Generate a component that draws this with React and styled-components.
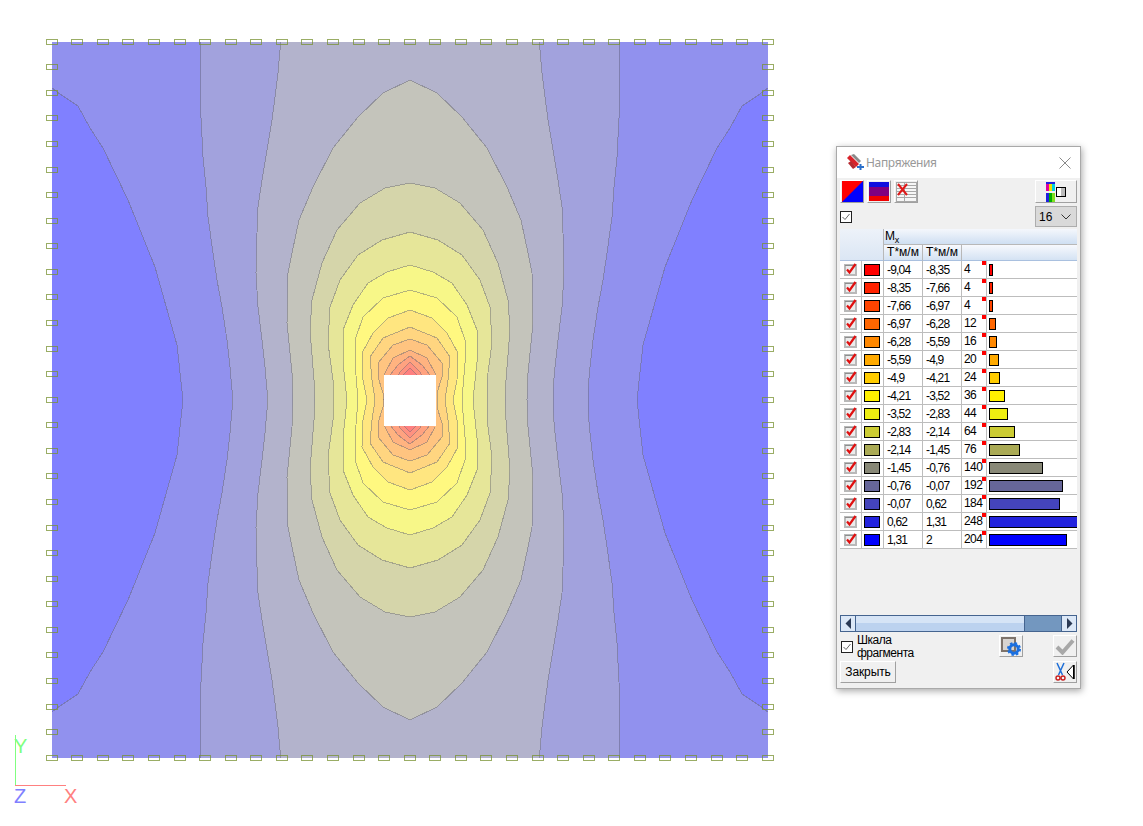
import React from "react";
import styled, { createGlobalStyle } from "styled-components";

const GlobalStyle = createGlobalStyle`
  html, body { margin: 0; padding: 0; background: #fff; overflow: hidden; }
  body { font-family: "Liberation Sans", Arial, sans-serif; }
`;

// legend, top to bottom
const legend = [
  { from: "-9,04", to: "-8,35", count: 4, color: "#ff0000", bar: 4 },
  { from: "-8,35", to: "-7,66", count: 4, color: "#ff2200", bar: 4 },
  { from: "-7,66", to: "-6,97", count: 4, color: "#ff4400", bar: 4 },
  { from: "-6,97", to: "-6,28", count: 12, color: "#ff6600", bar: 7 },
  { from: "-6,28", to: "-5,59", count: 16, color: "#ff8800", bar: 8 },
  { from: "-5,59", to: "-4,9", count: 20, color: "#ffaa00", bar: 10 },
  { from: "-4,9", to: "-4,21", count: 24, color: "#ffcc00", bar: 11 },
  { from: "-4,21", to: "-3,52", count: 36, color: "#fff000", bar: 16 },
  { from: "-3,52", to: "-2,83", count: 44, color: "#eeee11", bar: 19 },
  { from: "-2,83", to: "-2,14", count: 64, color: "#cccc33", bar: 26 },
  { from: "-2,14", to: "-1,45", count: 76, color: "#aaaa55", bar: 31 },
  { from: "-1,45", to: "-0,76", count: 140, color: "#888877", bar: 54 },
  { from: "-0,76", to: "-0,07", count: 192, color: "#666699", bar: 74 },
  { from: "-0,07", to: "0,62", count: 184, color: "#4444bb", bar: 71 },
  { from: "0,62", to: "1,31", count: 248, color: "#2222dd", bar: 92 },
  { from: "1,31", to: "2", count: 204, color: "#0000ff", bar: 78 },
];

// plot fill bands, outer to inner (legend colours at 50% over white)
const bands = [
  "#8080ff", "#9191ee", "#a2a2dd", "#b3b3cc", "#c4c4bb", "#d5d5aa", "#e6e699", "#f7f788",
  "#fff880", "#ffe680", "#ffd580", "#ffc480", "#ffb380", "#ffa280", "#ff9180", "#ff8080",
];

// contours as the upper left quarter, the rest is mirrored around (410, 400)
const lobe = [[52,88],[60,94],[78,106],[90,128],[103,148],[128,200],[155,267],[177,345],[183,400]];
const contours = [
  [[200.7,42],[200.7,112],[202,137],[203,157],[206,187],[208,217],[213,253],[217,280],[222,307],[227,340],[230,367],[232,390],[232,400]],
  [[280.7,42],[278,73],[275,97],[272,120],[267,150],[262,180],[258,207],[257,233],[256,273],[258,307],[262,340],[265,367],[267,390],[267,400]],
  [[410,80],[383,93],[358,117],[333,148],[313,187],[299,220],[292,253],[288,273],[287,323],[292,373],[293,400]],
  [[410,183],[385,188],[360,203],[337,230],[322,263],[312,300],[310,330],[314,380],[315,400]],
  [[410,232],[382,240],[358,255],[340,280],[330,307],[328,343],[333,380],[333,400]],
  [[410,265],[387,272],[368,283],[353,305],[343,330],[343,362],[347,400]],
  [[410,290],[383,298],[363,317],[355,340],[355,363],[358,400]],
  [[410,310],[388,318],[373,333],[362,353],[363,380],[367,400]],
  [[410,327],[383,338],[370,357],[372,380],[375,400]],
  [[410,339],[393,345],[378,363],[378,377],[383,393],[383,400]],
  [[410,350],[393,358],[385,373],[384,400]],
  [[410,356],[398,365],[390,375],[390,400]],
  [[410,362],[400,372],[396,380],[396,400]],
  [[410,368],[403,375],[403,400]],
];

const flipY = (pts) => [...pts].reverse().map(([x, y]) => [x, 800 - y]);
const flipX = (pts) => pts.map(([x, y]) => [820 - x, y]);
const str = (pts) => pts.map((p) => p.join(",")).join(" ");

const nodes = [];
for (let i = 0; i <= 28; i++) {
  const c = 25.57 * i;
  nodes.push([52 + c, 42], [52 + c, 758]);
  if (i > 0 && i < 28) nodes.push([52, 42 + c], [768, 42 + c]);
}

const LINE = "rgba(105,105,115,0.48)";

const Plot = () => {
  const left = [...lobe, ...flipY(lobe).slice(1)];
  return (
    <PlotSvg width="1143" height="826" viewBox="0 0 1143 826">
      <rect x="52" y="42" width="716" height="716" fill={bands[1]} />
      <polygon points={str(left)} fill={bands[0]} />
      <polygon points={str(flipX(left))} fill={bands[0]} />
      <g shapeRendering="crispEdges" fill="none" stroke={LINE}>
        <polyline points={str(left)} />
        <polyline points={str(flipX(left))} />
      </g>
      {contours.map((q, i) => {
        const half = [...q, ...flipY(q).slice(1)];
        const other = flipX(half);
        return (
          <g key={i}>
            <polygon points={str([...half, ...[...other].reverse()])} fill={bands[i + 2]} />
            <g shapeRendering="crispEdges" fill="none" stroke={LINE}>
              <polyline points={str(half)} />
              <polyline points={str(other)} />
            </g>
          </g>
        );
      })}
      <rect x="384" y="375" width="52" height="51" fill="#fff" />
      <g fill="none" stroke="rgba(120,145,50,0.75)" shapeRendering="crispEdges">
        {nodes.map(([x, y], i) => (
          <rect key={i} x={Math.round(x - 6.3) + 0.5} y={Math.round(y - 3.3) + 0.5} width="11" height="5" />
        ))}
      </g>
      <line x1="15.5" y1="735" x2="15.5" y2="786" stroke="#80ff80" />
      <line x1="15" y1="785.5" x2="66" y2="785.5" stroke="#ff8080" />
      <AxisLabel x="14" y="753" fill="#80ff80">Y</AxisLabel>
      <AxisLabel x="14" y="803" fill="#8080ff">Z</AxisLabel>
      <AxisLabel x="64" y="803" fill="#ff8080">X</AxisLabel>
    </PlotSvg>
  );
};

const PlotSvg = styled.svg`
  display: block;
`;

const AxisLabel = styled.text`
  font-family: "Liberation Sans", Arial, sans-serif;
  font-size: 20px;
`;

const Page = styled.div`
  position: relative;
  width: 1143px;
  height: 826px;
  overflow: hidden;
`;

const Window = styled.div`
  position: absolute;
  left: 836px;
  top: 146px;
  width: 245px;
  height: 543px;
  box-sizing: border-box;
  border: 1px solid #a9a9a9;
  background: #f0f0f0;
  box-shadow: 1px 2px 7px rgba(0, 0, 0, 0.35);
  display: flex;
  flex-direction: column;
  font-family: "Liberation Sans", Arial, sans-serif;
  font-size: 12px;
  color: #000;
`;

const TitleBar = styled.div`
  height: 31px;
  flex: none;
  background: #fff;
  display: flex;
  align-items: center;
  padding: 0 9px 0 9px;
  gap: 1px;
`;

const TitleText = styled.span`
  flex: 1;
  font-family: "Noto Sans", sans-serif;
  font-size: 12px;
  letter-spacing: -0.35px;
  color: #999;
`;

const Body = styled.div`
  flex: 1;
  padding: 2px 3px 0;
  display: flex;
  flex-direction: column;
`;

const Toolbar = styled.div`
  display: flex;
  height: 23px;
  gap: 3px;
`;

const ToolButton = styled.button`
  width: ${(p) => p.$w || 24}px;
  height: ${(p) => p.$h || 23}px;
  margin: 0 ${(p) => p.$mr || 0}px 0 ${(p) => (p.$push ? "auto" : "0")};
  padding: 0;
  flex: none;
  display: flex;
  align-items: center;
  justify-content: center;
  background: #f0f0f0;
  border: 1px solid;
  border-color: #fff #a0a0a0 #a0a0a0 #fff;
  font: inherit;
`;

const OptionRow = styled.div`
  display: flex;
  align-items: center;
  justify-content: space-between;
  height: 21px;
  margin: 3px 0 2px;
`;

const Box = styled.span`
  width: 12px;
  height: 12px;
  flex: none;
  box-sizing: border-box;
  border: 1px solid #222;
  background: #fff;
  display: flex;
  align-items: center;
  justify-content: center;
`;

const SelectBox = styled.div`
  width: 42px;
  height: 21px;
  box-sizing: border-box;
  background: #d9d9d9;
  border: 1px solid #adadad;
  display: flex;
  align-items: center;
  justify-content: space-between;
  padding: 0 5px 0 3px;
  font-size: 12px;
`;

const TableArea = styled.div`
  height: 386px;
  flex: none;
`;

const HeadGrid = styled.div`
  display: grid;
  grid-template-columns: 44px 39px 39px 1fr;
  grid-template-rows: 16px 16px;
  background: linear-gradient(#f4f7fc, #dbe6f4);
`;

const HeadCorner = styled.div`
  grid-row: 1 / 3;
  background: linear-gradient(#edf2f9, #dbe6f4);
  border-right: 1px solid #b8b8b8;
  border-bottom: 1px solid #a9c0df;
`;

const HeadSpan = styled.div`
  grid-column: 2 / 5;
  padding-left: 1px;
  line-height: 14px;
  border-bottom: 1px solid #b8b8b8;
  background: linear-gradient(#f4f7fc, #cfdff2);
  letter-spacing: -0.2px;

  sub {
    font-size: 9px;
    line-height: 0;
  }
`;

const HeadCell = styled.div`
  line-height: 15px;
  text-align: center;
  background: linear-gradient(#f7f9fd, #d4e2f3);
  border-right: ${(p) => (p.$last ? "none" : "1px solid #b8b8b8")};
  border-bottom: 1px solid #a9c0df;
`;

const Row = styled.div`
  display: grid;
  grid-template-columns: 22px 22px 39px 39px 25px 1fr;
  height: 18px;
  box-sizing: border-box;
  background: #fff;
  border-bottom: 1px solid #bdbdbd;
`;

const CheckCell = styled.div`
  display: flex;
  align-items: center;
  justify-content: center;
  border-right: 1px solid #bdbdbd;
`;

const SwatchCell = styled(CheckCell)`
  padding-right: 1px;
`;

const ValueCell = styled.div`
  display: flex;
  align-items: center;
  padding-left: 3px;
  border-right: 1px solid #bdbdbd;
  letter-spacing: -0.8px;
  overflow: hidden;
`;

const CountCell = styled(ValueCell)`
  position: relative;
  padding-left: 2px;
  padding-bottom: 2px;
  letter-spacing: -0.55px;
`;

const Swatch = styled.span`
  width: 16px;
  height: 12px;
  box-sizing: border-box;
  border: 1px solid #000;
  background: ${(p) => p.$color};
`;

const RedMark = styled.span`
  position: absolute;
  top: 0;
  right: 0;
  width: 4px;
  height: 4px;
  background: #ff0000;
`;

const BarCell = styled.div`
  display: flex;
  align-items: center;
  padding-left: 2px;
  overflow: hidden;
`;

const Bar = styled.span`
  height: 12px;
  flex: none;
  box-sizing: border-box;
  border: 1px solid #000;
  background: ${(p) => p.$color};
`;

const ScrollBar = styled.div`
  height: 17px;
  flex: none;
  display: flex;
  background: #7397bf;
  border-top: 1px solid #45648f;
  border-bottom: 1px solid #45648f;
  box-sizing: border-box;
`;

const ScrollBtn = styled.div`
  width: 16px;
  flex: none;
  box-sizing: border-box;
  margin-left: ${(p) => (p.$end ? "auto" : 0)};
  background: #dce8f7;
  border: 1px solid #45648f;
  border-width: 0 1px;
  display: flex;
  align-items: center;
  justify-content: center;
`;

const ScrollThumb = styled.div`
  width: 169px;
  box-sizing: border-box;
  background: linear-gradient(#d6e4f6 50%, #bcd2ef 50%);
  border-right: 1px solid #45648f;
`;

const FootRow = styled.div`
  display: flex;
  align-items: center;
  justify-content: space-between;
  height: 22px;
  margin-top: ${(p) => p.$mt}px;
`;

const ScaleCheck = styled.div`
  display: flex;
  align-items: center;
  gap: 4px;
  margin-left: 1px;
  padding-top: 1px;
  line-height: 13px;
  letter-spacing: -0.5px;
`;

const FootLeft = styled.div`
  flex: 1;
`;

const CloseButton = styled(ToolButton)`
  letter-spacing: -0.1px;
`;

const TickSmall = () => (
  <svg width="10" height="10" viewBox="0 0 10 10">
    <path d="M1.5 5 L4 7.5 L8.5 2" fill="none" stroke="#666" strokeWidth="1" />
  </svg>
);

const RowCheck = () => (
  <svg width="13" height="13" viewBox="0 0 13 13">
    <rect x="0" y="1" width="13" height="12" fill="#b9b9b9" />
    <rect x="1" y="2" width="11" height="1" fill="#8e8e8e" />
    <rect x="2" y="3" width="9" height="8" fill="#ececec" />
    <path d="M3 6.5 L5.5 9.5 L11.5 1" fill="none" stroke="#e01010" strokeWidth="2.2" />
  </svg>
);

const LogoIcon = () => (
  <svg width="19" height="17" viewBox="0 0 19 17">
    <path d="M1 4 L4 1 L13 10 L10 13 Z" fill="#d8232a" />
    <path d="M5 1 L8 0 L15 7 L13 9 Z" fill="#8a8a8a" />
    <path d="M2 9 L5 7 L10 13 L7 15 Z" fill="#b52a30" />
    <path d="M11 13 H18 M14.5 10 V16" stroke="#2a6fc9" strokeWidth="2" />
  </svg>
);

const CloseIcon = () => (
  <svg width="12" height="12" viewBox="0 0 12 12">
    <path d="M0.5 0.5 L11.5 11.5 M11.5 0.5 L0.5 11.5" stroke="#8a8a8a" strokeWidth="1" />
  </svg>
);

const DiagIcon = () => (
  <svg width="21" height="21" viewBox="0 0 21 21">
    <rect width="21" height="21" fill="#0000ff" />
    <path d="M0 0 H21 L0 21 Z" fill="#ff0000" />
  </svg>
);

const StripeIcon = () => (
  <svg width="20" height="19" viewBox="0 0 20 19">
    <rect width="20" height="5" fill="#1010e0" />
    <rect y="5" width="20" height="9" fill="#800080" />
    <rect y="14" width="20" height="5" fill="#f00000" />
  </svg>
);

const TableXIcon = () => (
  <svg width="21" height="20" viewBox="0 0 21 20">
    <rect x="0.5" y="0.5" width="20" height="19" fill="#f6f6f6" stroke="#a8a8a8" />
    <path d="M1 3.5H20M1 6.5H20M1 9.5H20M1 12.5H20M1 15.5H20M8.5 1V19" stroke="#a8a8a8" fill="none" />
    <path d="M2 2 L11 13 M11 2 L2 13" stroke="#e01818" strokeWidth="2" />
  </svg>
);

const PaletteIcon = () => (
  <svg width="20" height="20" viewBox="0 0 20 20">
    <rect x="0" y="0" width="3" height="9" fill="#e000a0" />
    <rect x="3" y="0" width="3" height="9" fill="#f0e000" />
    <rect x="6" y="0" width="3" height="9" fill="#00d0e0" />
    <rect x="0" y="0" width="9" height="2" fill="#2020e0" />
    <rect x="0" y="11" width="3" height="9" fill="#2020e0" />
    <rect x="3" y="11" width="3" height="9" fill="#00b000" />
    <rect x="6" y="11" width="3" height="9" fill="#80e020" />
    <rect x="10.5" y="5.5" width="9" height="9" fill="#fff" stroke="#000" />
    <rect x="15" y="6" width="4" height="8" fill="#bbb" />
  </svg>
);

const Chevron = () => (
  <svg width="10" height="6" viewBox="0 0 10 6">
    <path d="M0.5 0.5 L5 5 L9.5 0.5" fill="none" stroke="#333" strokeWidth="1" />
  </svg>
);

const ArrowIcon = ({ right }) => (
  <svg width="7" height="11" viewBox="0 0 7 11">
    <path d={right ? "M1 0 L6.5 5.5 L1 11 Z" : "M6 0 L0.5 5.5 L6 11 Z"} fill="#2b3a55" />
  </svg>
);

const GearIcon = () => (
  <svg width="20" height="19" viewBox="0 0 20 19">
    <rect x="1" y="1" width="13" height="13" fill="#d8d4d0" stroke="#7d736b" strokeWidth="2" />
    <circle cx="13" cy="12" r="4.2" fill="none" stroke="#1a6fe0" strokeWidth="3" />
    <circle cx="13" cy="12" r="6" fill="none" stroke="#1a6fe0" strokeWidth="2" strokeDasharray="2.4 2.3" />
  </svg>
);

const DisabledCheck = () => (
  <svg width="20" height="17" viewBox="0 0 20 17">
    <path d="M2 9 L7.5 14.5 L18 2.5" fill="none" stroke="#a8a8a8" strokeWidth="4" />
  </svg>
);

const ScissorsIcon = () => (
  <svg width="22" height="20" viewBox="0 0 22 20">
    <path d="M3 1 L8.5 13 M10 1 L4.5 13" stroke="#1e6fd8" strokeWidth="1.5" fill="none" />
    <circle cx="4" cy="16" r="2" fill="none" stroke="#c81e1e" strokeWidth="1.4" />
    <circle cx="9" cy="16" r="2" fill="none" stroke="#c81e1e" strokeWidth="1.4" />
    <path d="M19.5 3 L13 10 L19.5 17 Z" fill="#fff" stroke="#000" />
    <path d="M20 3 V17" stroke="#000" strokeWidth="1.5" />
  </svg>
);

const LegendRow = ({ item }) => (
  <Row>
    <CheckCell><RowCheck /></CheckCell>
    <SwatchCell><Swatch $color={item.color} /></SwatchCell>
    <ValueCell>{item.from}</ValueCell>
    <ValueCell>{item.to}</ValueCell>
    <CountCell>
      {item.count}
      <RedMark />
    </CountCell>
    <BarCell>
      <Bar $color={item.color} style={{ width: item.bar }} />
    </BarCell>
  </Row>
);

const App = () => (
  <Page>
    <GlobalStyle />
    <Plot />
    <Window>
      <TitleBar>
        <LogoIcon />
        <TitleText>Напряжения</TitleText>
        <CloseIcon />
      </TitleBar>
      <Body>
        <Toolbar>
          <ToolButton><DiagIcon /></ToolButton>
          <ToolButton><StripeIcon /></ToolButton>
          <ToolButton><TableXIcon /></ToolButton>
          <ToolButton $w={42} $push><PaletteIcon /></ToolButton>
        </Toolbar>
        <OptionRow>
          <Box><TickSmall /></Box>
          <SelectBox>
            16
            <Chevron />
          </SelectBox>
        </OptionRow>
        <TableArea>
          <HeadGrid>
            <HeadCorner />
            <HeadSpan>M<sub>x</sub></HeadSpan>
            <HeadCell>Т*м/м</HeadCell>
            <HeadCell>Т*м/м</HeadCell>
            <HeadCell $last />
          </HeadGrid>
          {legend.map((item) => (
            <LegendRow key={item.from} item={item} />
          ))}
        </TableArea>
        <ScrollBar>
          <ScrollBtn><ArrowIcon /></ScrollBtn>
          <ScrollThumb />
          <ScrollBtn $end><ArrowIcon right /></ScrollBtn>
        </ScrollBar>
        <FootRow $mt={3}>
          <FootLeft>
            <ScaleCheck>
              <Box><TickSmall /></Box>
              <span>Шкала<br />фрагмента</span>
            </ScaleCheck>
          </FootLeft>
          <ToolButton $h={22} $mr={30}><GearIcon /></ToolButton>
          <ToolButton $h={22}><DisabledCheck /></ToolButton>
        </FootRow>
        <FootRow $mt={4}>
          <CloseButton $w={56} $h={22}>Закрыть</CloseButton>
          <ToolButton $h={22}><ScissorsIcon /></ToolButton>
        </FootRow>
      </Body>
    </Window>
  </Page>
);

export default App;
